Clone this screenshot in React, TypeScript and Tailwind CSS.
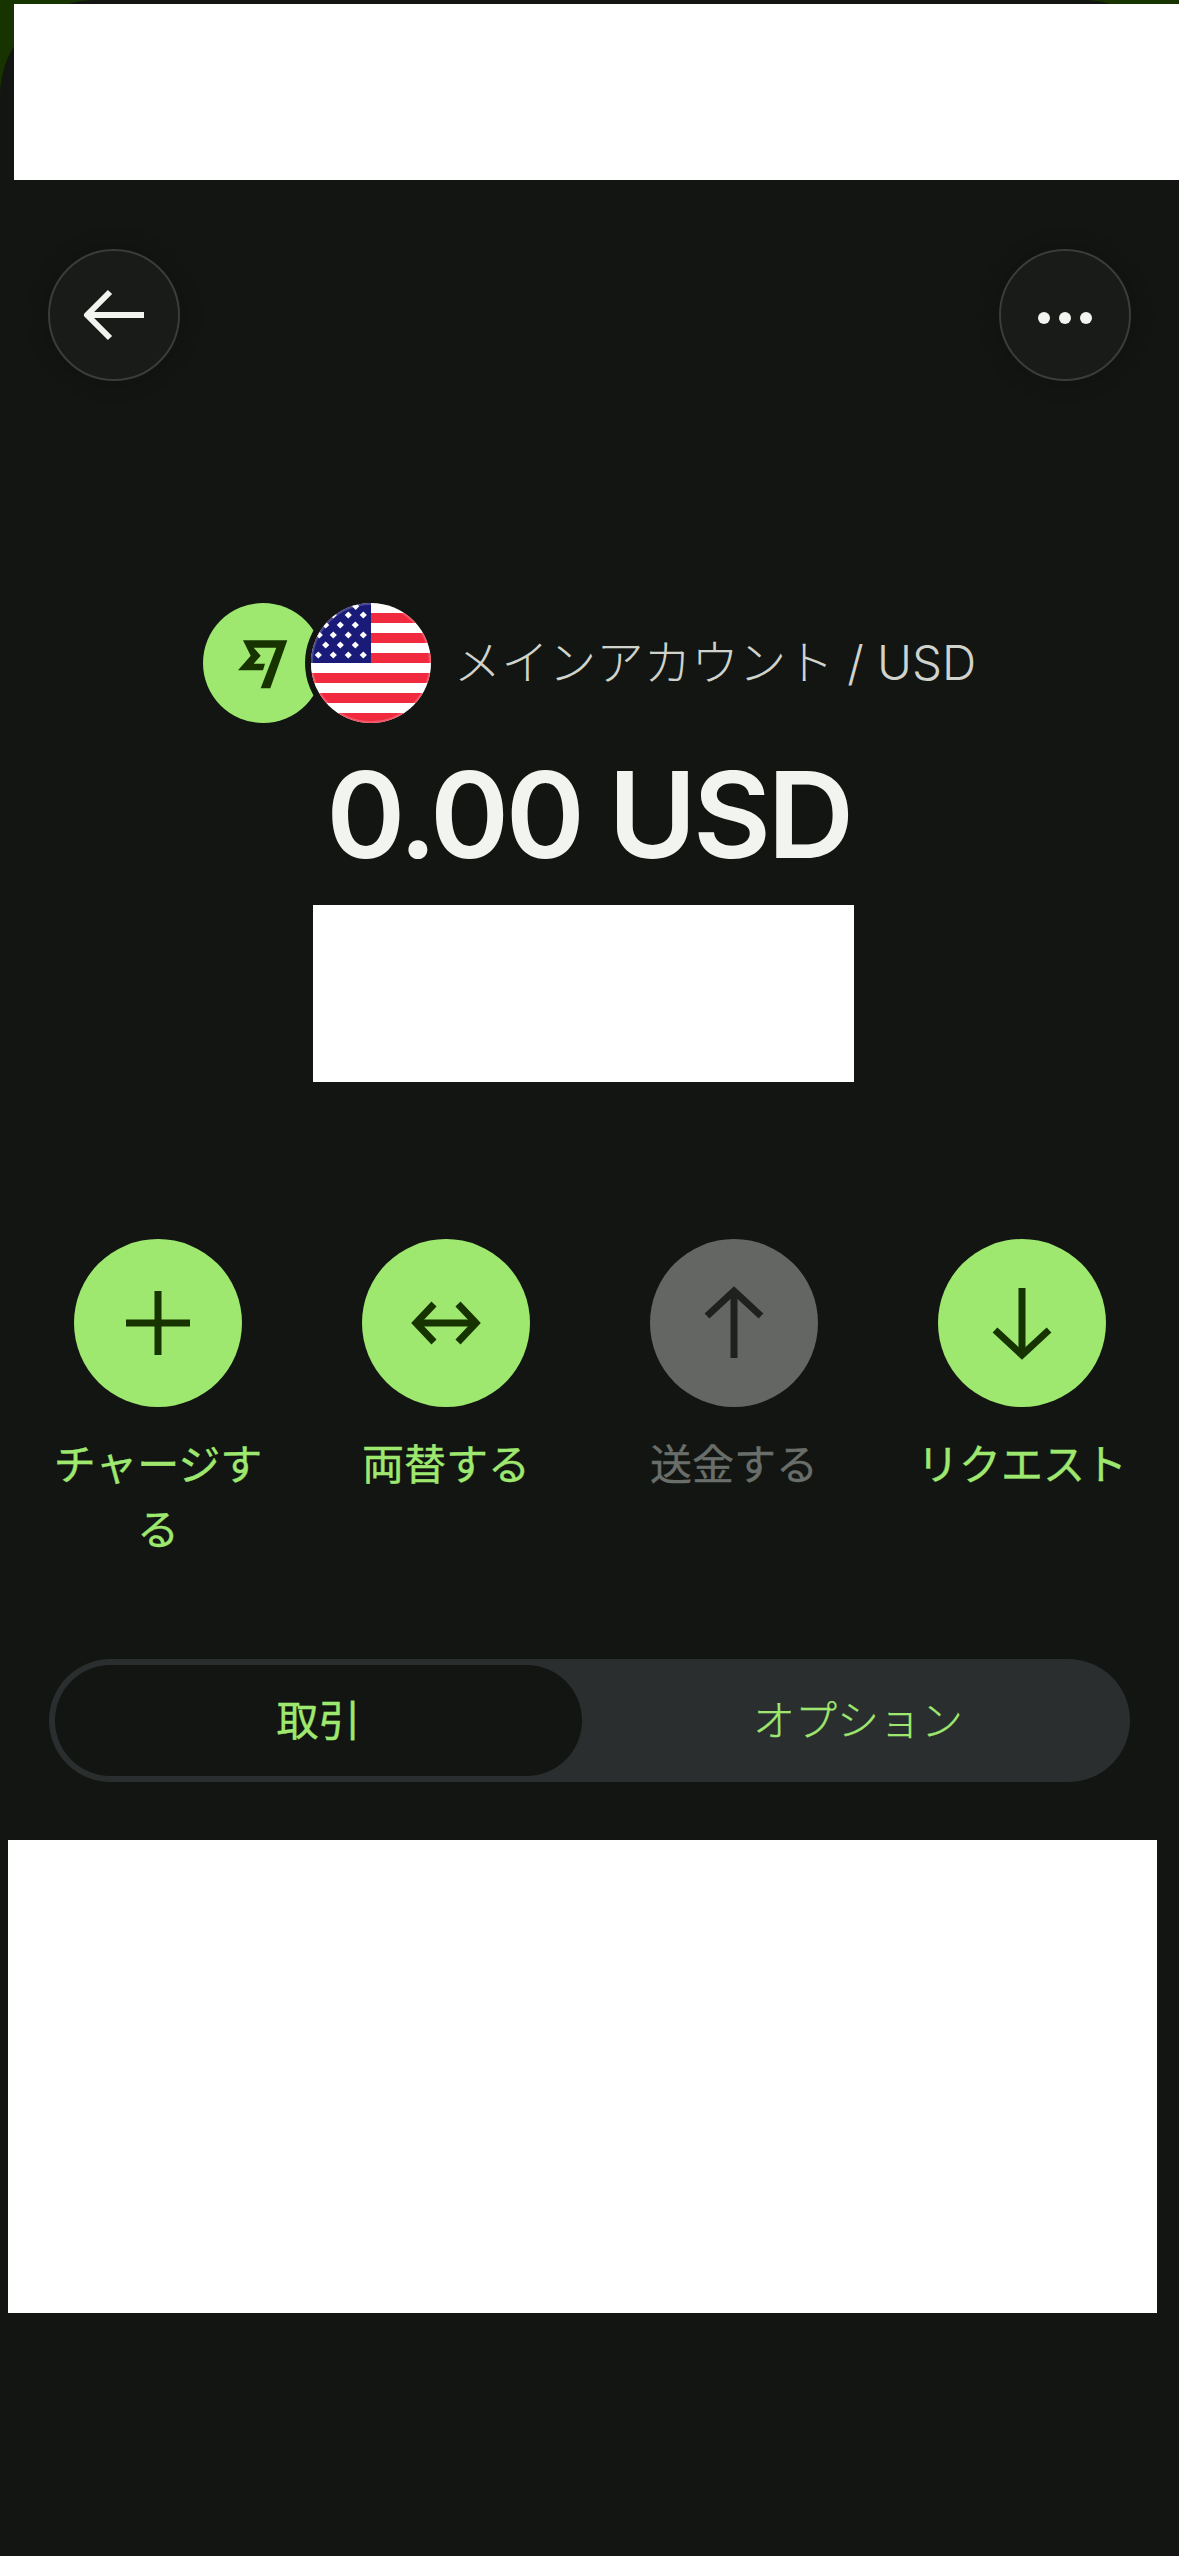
const STAR_ROWS: [number, number[]][] = [
  [3.3, [44.7]],
  [12, [22.3, 37.3, 52.3]],
  [22, [14.7, 29.3, 44.3]],
  [32, [8.3, 22.3, 37.3, 52.3]],
  [42, [14.7, 29.3, 44.3]],
  [52, [7.3, 22.3, 37.3, 52.3]],
];

function WiseLogo() {
  return (
    <div className="w-[120px] h-[120px] rounded-full bg-[#9fe870] shrink-0">
      <svg viewBox="0 0 120 120" className="w-full h-full">
        <polygon
          fill="#163300"
          points="40,37.3 84.3,37.3 67.3,85.3 57.7,85.3 73.3,44.7 50.7,44.7 57.7,52.7 50.7,60.7 62,60.7 60,67.3 35,67.3 47.7,52.7"
        />
      </svg>
    </div>
  );
}

function UsFlag() {
  return (
    <div className="relative -ml-[12px] w-[120px] h-[120px] rounded-full ring-[6px] ring-[#121511] overflow-hidden shrink-0">
      <svg viewBox="0 0 120 120" className="w-full h-full">
        <rect width="120" height="120" fill="#ffffff" />
        {[10, 30, 50, 70, 90, 110].map((y) => (
          <rect key={y} x="0" y={y} width="120" height="10" fill="#f22a40" />
        ))}
        <rect width="60" height="60" fill="#1a1a78" />
        {STAR_ROWS.map(([y, xs]) =>
          xs.map((x) => (
            <polygon
              key={`${x}-${y}`}
              fill="#ffffff"
              points={`${x},${y - 3.6} ${x + 3.6},${y} ${x},${y + 3.6} ${x - 3.6},${y}`}
            />
          ))
        )}
        <circle cx="60" cy="60" r="59" fill="none" stroke="#ffffff" strokeOpacity="0.2" strokeWidth="2" />
      </svg>
    </div>
  );
}

function RoundButton({ children }: { children: React.ReactNode }) {
  return (
    <button className="w-[132px] h-[132px] rounded-full bg-[#181b18] border-2 border-[#3a3d38] shadow-[0_0_24px_rgba(0,0,0,0.2)]">
      <svg viewBox="0 0 132 132" className="-m-[2px] w-[132px] h-[132px]">
        {children}
      </svg>
    </button>
  );
}

const ACTIONS = [
  {
    label: 'チャージする',
    active: true,
    paths: ['M84 52V116', 'M52 84H116'],
  },
  {
    label: '両替する',
    active: true,
    paths: ['M54 84H114', 'M72 65L54 84L72 103', 'M96 65L114 84L96 103'],
  },
  {
    label: '送金する',
    active: false,
    paths: ['M84 52V119', 'M57 77L84 52L111 77'],
  },
  {
    label: 'リクエスト',
    active: true,
    paths: ['M84 49V116', 'M57 91L84 116L111 91'],
  },
];

function ActionItem({ label, active, paths }: { label: string; active: boolean; paths: string[] }) {
  return (
    <div className="flex flex-col items-center">
      <div className={`w-[168px] h-[168px] rounded-full ${active ? 'bg-[#9fe870]' : 'bg-[#636662]'}`}>
        <svg viewBox="0 0 168 168" className="w-full h-full" fill="none">
          {paths.map((d) => (
            <path key={d} d={d} stroke={active ? '#163300' : '#1e211e'} strokeWidth="7" />
          ))}
        </svg>
      </div>
      <div
        className={`mt-[25px] w-[240px] text-center text-[42px] leading-[65px] font-normal [-webkit-text-stroke:0.4px_currentColor] ${active ? 'text-[#9fe870]' : 'text-[#6a6e6a]'}`}
      >
        {label}
      </div>
    </div>
  );
}

export default function App() {
  return (
    <div className="w-[1179px] h-[2556px] bg-[#163300] overflow-hidden font-['Inter','Noto_Sans_CJK_JP',sans-serif]">
      <div className="h-full rounded-t-[96px] bg-[#121511] flex flex-col">
        <div className="mt-[4px] ml-[14px] h-[176px] bg-white" />

        <div className="mt-[69px] px-[48px] flex justify-between">
          <RoundButton>
            <path d="M96 66H40" stroke="#f2f5ef" strokeWidth="6" fill="none" />
            <path d="M62 43L39 66L62 89" stroke="#f2f5ef" strokeWidth="6" fill="none" strokeLinejoin="round" />
          </RoundButton>
          <RoundButton>
            <circle cx="45" cy="69" r="6" fill="#f2f5ef" />
            <circle cx="66" cy="69" r="6" fill="#f2f5ef" />
            <circle cx="87" cy="69" r="6" fill="#f2f5ef" />
          </RoundButton>
        </div>

        <div className="mt-[222px] flex items-center justify-center">
          <WiseLogo />
          <UsFlag />
          <span className="ml-[23px] text-[47.5px] leading-[60px] font-light text-[#d0d3cc]">
            メインアカウント / USD
          </span>
        </div>

        <div className="mt-[20px] pr-[2px] h-[144px] text-center text-[120px] leading-[144px] font-semibold tracking-[-3.5px] text-[#f2f5ef]">
          0.00 USD
        </div>

        <div className="mt-[18px] ml-[313px] w-[541px] h-[177px] bg-white" />

        <div className="mt-[157px] px-[14px] grid grid-cols-[repeat(4,288px)]">
          {ACTIONS.map((action) => (
            <ActionItem key={action.label} {...action} />
          ))}
        </div>

        <div className="mt-[97px] mx-[49px] h-[123px] p-[6px] rounded-full bg-[#2a2e2f] flex text-[42px] text-[#9fe870]">
          <div className="w-[527px] rounded-full bg-[#121511] flex items-center justify-center font-normal [-webkit-text-stroke:0.4px_currentColor]">
            取引
          </div>
          <div className="flex-1 pl-[10px] flex items-center justify-center font-light [-webkit-text-stroke:0.25px_currentColor]">
            オプション
          </div>
        </div>

        <div className="mt-[58px] ml-[8px] w-[1149px] h-[473px] bg-white" />
      </div>
    </div>
  );
}
